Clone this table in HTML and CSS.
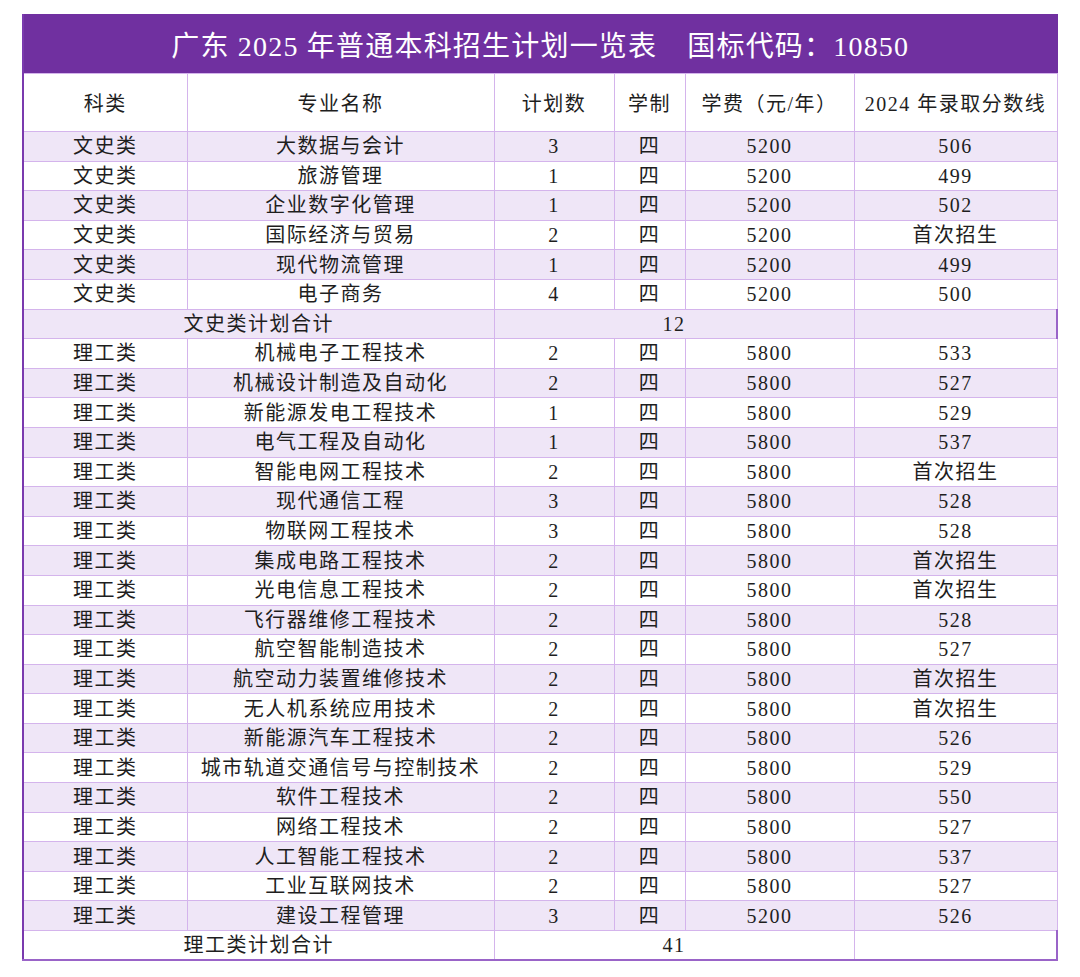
FILE: index.html
```html
<!DOCTYPE html>
<html lang="zh-CN">
<head>
<meta charset="utf-8">
<title>广东2025年普通本科招生计划一览表</title>
<link rel="stylesheet" href="styles.css">
</head>
<body>
<div class="wrap">
<table class="plan">
  <colgroup>
    <col class="c1"><col class="c2"><col class="c3"><col class="c4"><col class="c5"><col class="c6">
  </colgroup>
  <thead>
    <tr class="title-row"><th colspan="6" class="title">广东 2025 年普通本科招生计划一览表<span class="gap"></span>国标代码：10850</th></tr>
    <tr class="head-row">
      <th>科类</th><th>专业名称</th><th class="sep">计划数</th><th>学制</th><th>学费（元/年）</th><th class="last">2024 年录取分数线</th>
    </tr>
  </thead>
  <tbody>
    <tr class="alt"><td>文史类</td><td>大数据与会计</td><td class="sep">3</td><td>四</td><td>5200</td><td class="last">506</td></tr>
    <tr><td>文史类</td><td>旅游管理</td><td class="sep">1</td><td>四</td><td>5200</td><td class="last">499</td></tr>
    <tr class="alt"><td>文史类</td><td>企业数字化管理</td><td class="sep">1</td><td>四</td><td>5200</td><td class="last">502</td></tr>
    <tr><td>文史类</td><td>国际经济与贸易</td><td class="sep">2</td><td>四</td><td>5200</td><td class="last">首次招生</td></tr>
    <tr class="alt"><td>文史类</td><td>现代物流管理</td><td class="sep">1</td><td>四</td><td>5200</td><td class="last">499</td></tr>
    <tr><td>文史类</td><td>电子商务</td><td class="sep">4</td><td>四</td><td>5200</td><td class="last">500</td></tr>
    <tr class="alt sum"><td colspan="2">文史类计划合计</td><td colspan="3">12</td><td class="last dark"></td></tr>
    <tr><td>理工类</td><td>机械电子工程技术</td><td class="sep">2</td><td>四</td><td>5800</td><td class="last">533</td></tr>
    <tr class="alt"><td>理工类</td><td>机械设计制造及自动化</td><td class="sep">2</td><td>四</td><td>5800</td><td class="last">527</td></tr>
    <tr><td>理工类</td><td>新能源发电工程技术</td><td class="sep">1</td><td>四</td><td>5800</td><td class="last">529</td></tr>
    <tr class="alt"><td>理工类</td><td>电气工程及自动化</td><td class="sep">1</td><td>四</td><td>5800</td><td class="last">537</td></tr>
    <tr><td>理工类</td><td>智能电网工程技术</td><td class="sep">2</td><td>四</td><td>5800</td><td class="last">首次招生</td></tr>
    <tr class="alt"><td>理工类</td><td>现代通信工程</td><td class="sep">3</td><td>四</td><td>5800</td><td class="last">528</td></tr>
    <tr><td>理工类</td><td>物联网工程技术</td><td class="sep">3</td><td>四</td><td>5800</td><td class="last">528</td></tr>
    <tr class="alt"><td>理工类</td><td>集成电路工程技术</td><td class="sep">2</td><td>四</td><td>5800</td><td class="last">首次招生</td></tr>
    <tr><td>理工类</td><td>光电信息工程技术</td><td class="sep">2</td><td>四</td><td>5800</td><td class="last">首次招生</td></tr>
    <tr class="alt"><td>理工类</td><td>飞行器维修工程技术</td><td class="sep">2</td><td>四</td><td>5800</td><td class="last">528</td></tr>
    <tr><td>理工类</td><td>航空智能制造技术</td><td class="sep">2</td><td>四</td><td>5800</td><td class="last">527</td></tr>
    <tr class="alt"><td>理工类</td><td>航空动力装置维修技术</td><td class="sep">2</td><td>四</td><td>5800</td><td class="last">首次招生</td></tr>
    <tr><td>理工类</td><td>无人机系统应用技术</td><td class="sep">2</td><td>四</td><td>5800</td><td class="last">首次招生</td></tr>
    <tr class="alt"><td>理工类</td><td>新能源汽车工程技术</td><td class="sep">2</td><td>四</td><td>5800</td><td class="last">526</td></tr>
    <tr><td>理工类</td><td>城市轨道交通信号与控制技术</td><td class="sep">2</td><td>四</td><td>5800</td><td class="last">529</td></tr>
    <tr class="alt"><td>理工类</td><td>软件工程技术</td><td class="sep">2</td><td>四</td><td>5800</td><td class="last">550</td></tr>
    <tr><td>理工类</td><td>网络工程技术</td><td class="sep">2</td><td>四</td><td>5800</td><td class="last">527</td></tr>
    <tr class="alt"><td>理工类</td><td>人工智能工程技术</td><td class="sep">2</td><td>四</td><td>5800</td><td class="last">537</td></tr>
    <tr><td>理工类</td><td>工业互联网技术</td><td class="sep">2</td><td>四</td><td>5800</td><td class="last">527</td></tr>
    <tr class="alt"><td>理工类</td><td>建设工程管理</td><td class="sep">3</td><td>四</td><td>5200</td><td class="last">526</td></tr>
    <tr class="sum end"><td colspan="2">理工类计划合计</td><td colspan="3">41</td><td class="last dark"></td></tr>
  </tbody>
</table>
</div>
</body>
</html>
```
FILE: styles.css
```css
html, body {
  margin: 0;
  padding: 0;
  background: #ffffff;
}

.wrap {
  padding: 14px 0 0 22px;
}

.plan {
  border-collapse: collapse;
  table-layout: fixed;
  width: 1035px;
  font-family: "Liberation Serif", "Noto Sans CJK SC", serif;
  font-size: 20px;
  color: #1e1e1e;
  border-left: 2px solid #7a3aae;
}

.c1 { width: 164px; }
.c2 { width: 307px; }
.c3 { width: 120px; }
.c4 { width: 71px; }
.c5 { width: 169px; }
.c6 { width: 203px; }

.plan th,
.plan td {
  border: 1px solid #d4b4ec;
  text-align: center;
  vertical-align: middle;
  padding: 0;
  font-family: "Liberation Serif", "Noto Sans CJK SC", serif;
  font-weight: 400;
  letter-spacing: 1.5px;
  white-space: nowrap;
  overflow: hidden;
}

.title-row th.title {
  background: #7030a0;
  color: #ffffff;
  height: 58px;
  font-family: "Liberation Serif", "Noto Sans CJK SC", serif;
  font-size: 28px;
  letter-spacing: 1.2px;
  border: 1px solid #7030a0;
  border-bottom: 1px solid #d4b4ec;
}

.title .gap {
  display: inline-block;
  width: 30px;
}

.head-row th {
  height: 57px;
  background: #ffffff;
}

.plan tbody tr {
  height: 29.6px;
}

.plan tbody td {
  line-height: 22px;
}

.plan tr.alt td {
  background: #efe6f7;
}

.plan .sep {
  border-left: 1px solid #7a3aae;
}

.plan tbody td.dark {
  border-right: 2px solid #9a64c8;
}

.plan tr.end td {
  border-bottom: 2px solid #9a64c8;
}
```
